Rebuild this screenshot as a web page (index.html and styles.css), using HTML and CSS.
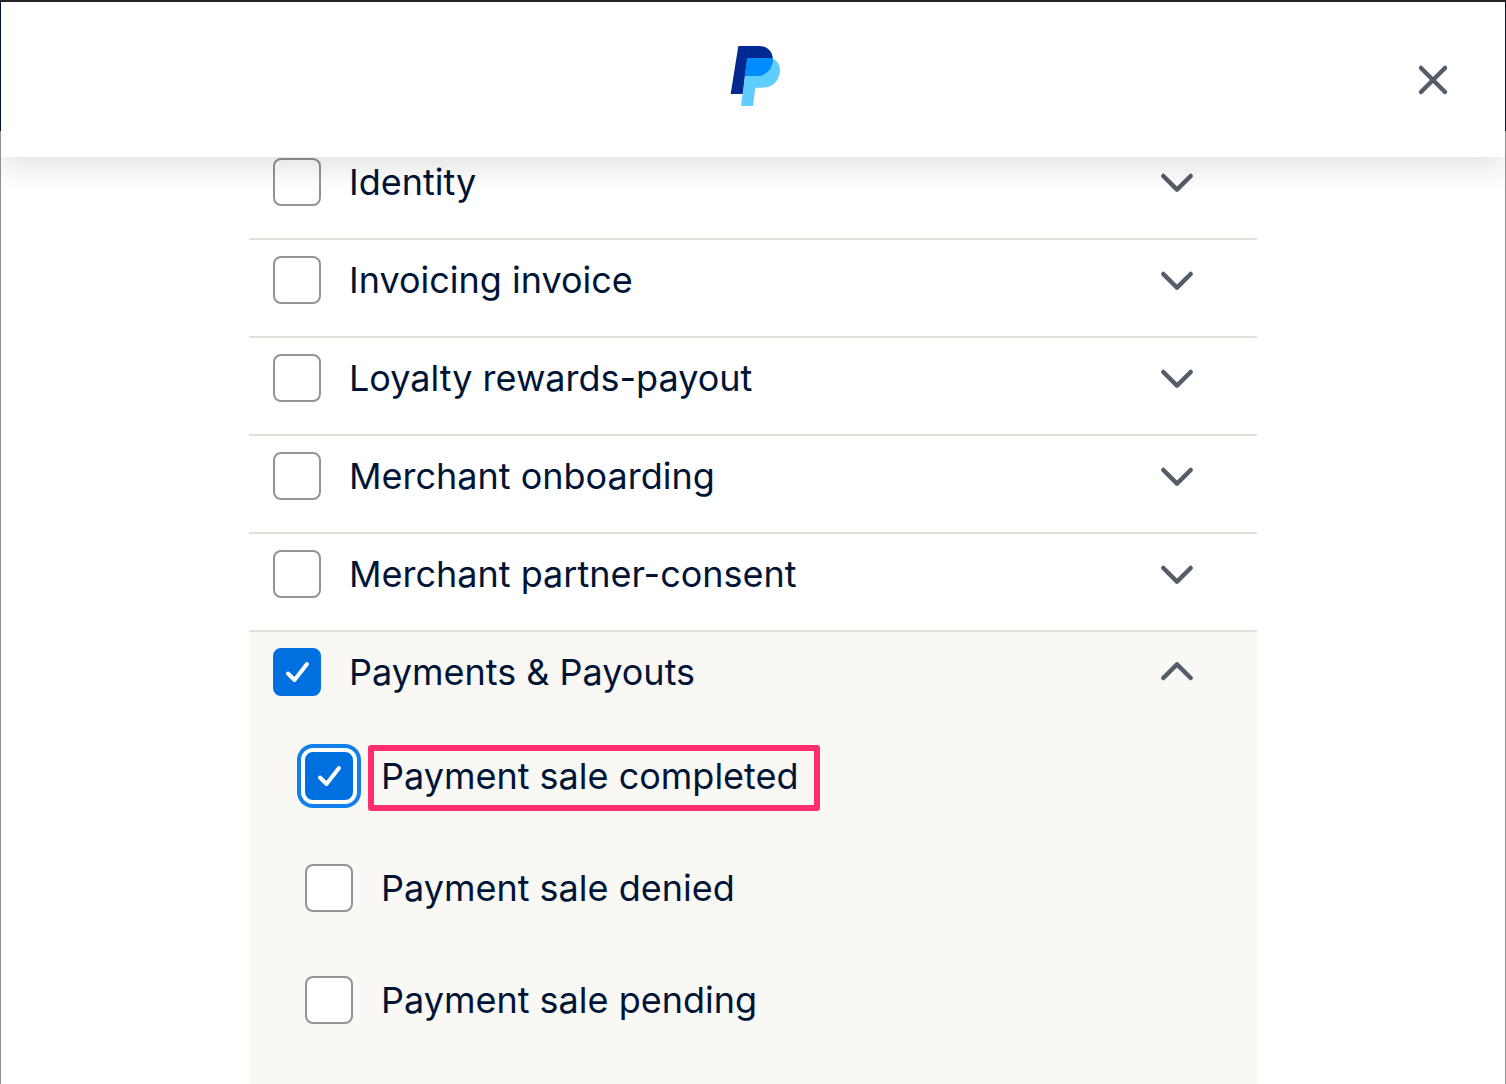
FILE: index.html
```html
<!DOCTYPE html>
<html lang="en">
<head>
<meta charset="utf-8">
<meta name="viewport" content="width=device-width, initial-scale=1">
<title>PayPal webhook events</title>
<link rel="stylesheet" href="styles.css">
</head>
<body>
<svg class="sprite" aria-hidden="true">
  <symbol id="chevron" viewBox="0 0 40 40"><path d="M6.300 14 20 27.700 33.700 14"/></symbol>
</svg>
<div class="dialog">
  <header class="header">
    <svg class="logo" viewBox="33 33 162 180" role="img" aria-label="PayPal">
      <path fill="#002991" d="M70 33H132C158 33 175 50 174 78C170 105 150 123 128 123H90L84 177H47Z"/>
      <path fill="#60cdff" d="M97 69H169C187 75 195 90 195 108C193 138 172 158 145 158H121L114 213H78Z"/>
      <path fill="#008cff" d="M97 69H172Q174 73 174 78C170 105 150 123 128 123H89Z"/>
    </svg>
    <button class="close" type="button" aria-label="Close">
      <svg class="icon" viewBox="0 0 40 40"><path d="M8 8 32 32M32 8 8 32"/></svg>
    </button>
  </header>
  <main class="events">
    <section class="group">
      <div class="row">
        <label class="option"><input class="check" type="checkbox"><span>Identity</span></label>
        <button class="toggle" type="button" aria-label="Expand Identity" aria-expanded="false"><svg class="icon"><use href="#chevron"/></svg></button>
      </div>
    </section>
    <section class="group">
      <div class="row">
        <label class="option"><input class="check" type="checkbox"><span>Invoicing invoice</span></label>
        <button class="toggle" type="button" aria-label="Expand Invoicing invoice" aria-expanded="false"><svg class="icon"><use href="#chevron"/></svg></button>
      </div>
    </section>
    <section class="group">
      <div class="row">
        <label class="option"><input class="check" type="checkbox"><span>Loyalty rewards-payout</span></label>
        <button class="toggle" type="button" aria-label="Expand Loyalty rewards-payout" aria-expanded="false"><svg class="icon"><use href="#chevron"/></svg></button>
      </div>
    </section>
    <section class="group">
      <div class="row">
        <label class="option"><input class="check" type="checkbox"><span>Merchant onboarding</span></label>
        <button class="toggle" type="button" aria-label="Expand Merchant onboarding" aria-expanded="false"><svg class="icon"><use href="#chevron"/></svg></button>
      </div>
    </section>
    <section class="group">
      <div class="row">
        <label class="option"><input class="check" type="checkbox"><span>Merchant partner-consent</span></label>
        <button class="toggle" type="button" aria-label="Expand Merchant partner-consent" aria-expanded="false"><svg class="icon"><use href="#chevron"/></svg></button>
      </div>
    </section>
    <section class="group group-open">
      <div class="row">
        <label class="option"><input class="check" type="checkbox" checked><span>Payments &amp; Payouts</span></label>
        <button class="toggle toggle-open" type="button" aria-label="Collapse Payments &amp; Payouts" aria-expanded="true"><svg class="icon"><use href="#chevron"/></svg></button>
      </div>
      <div class="children">
        <label class="option option-marked"><input class="check check-focus" type="checkbox" checked><span>Payment sale completed</span></label>
        <label class="option"><input class="check" type="checkbox"><span>Payment sale denied</span></label>
        <label class="option"><input class="check" type="checkbox"><span>Payment sale pending</span></label>
      </div>
    </section>
  </main>
</div>
</body>
</html>
```
FILE: styles.css
```css
* {
  box-sizing: border-box;
}

body {
  margin: 0;
  padding: 2px 1px 0;
  background: linear-gradient(#202226 2px, #001435 2px, #001435 131px, #909090 131px);
  color: #001435;
  font: 400 36px/48px Inter, "Liberation Sans", sans-serif;
}

.sprite {
  position: absolute;
  width: 0;
  height: 0;
}

.dialog {
  display: flex;
  flex-direction: column;
  min-height: calc(100vh - 2px);
  overflow: hidden;
  background: #fff;
}

.header {
  position: relative;
  z-index: 1;
  display: grid;
  grid-template-columns: 1fr auto 1fr;
  align-items: center;
  height: 155px;
  margin-bottom: -15px;
  padding: 0 52px;
  background: #fff;
  box-shadow: 0 10px 30px rgba(0, 0, 0, 0.12);
}

.logo {
  grid-column: 2;
  width: 54px;
  height: 60px;
  margin-bottom: 8px;
}

.close,
.toggle {
  display: block;
  padding: 0;
  border: 0;
  background: none;
  color: #545d68;
  cursor: pointer;
}

.close {
  justify-self: end;
}

.icon {
  display: block;
  width: 40px;
  height: 40px;
  fill: none;
  stroke: currentColor;
  stroke-width: 4.500;
  stroke-linecap: round;
  stroke-linejoin: round;
}

.toggle-open .icon {
  transform: rotate(180deg);
}

.events {
  display: flex;
  flex: 1;
  flex-direction: column;
  width: 100%;
  max-width: 1008px;
  margin: 0 auto;
}

.group {
  border-bottom: 2px solid #e2dfd9;
}

.group-open {
  flex: 1;
  border-bottom: 0;
  background: #f9f8f5;
}

.row {
  display: flex;
  align-items: center;
  justify-content: space-between;
  padding: 16px 60px 32px 24px;
}

.option {
  display: flex;
  align-items: center;
  gap: 28px;
}

.children {
  display: flex;
  flex-direction: column;
  align-items: flex-start;
  gap: 64px;
  padding: 24px 56px 60px;
}

.check {
  appearance: none;
  flex: none;
  width: 48px;
  height: 48px;
  margin: 0;
  border: 2px solid #929496;
  border-radius: 8px;
  background: #fff;
}

.group:first-child .check {
  background: transparent;
}

.check:checked {
  border-color: #0070e0;
  background: #0070e0 url("data:image/svg+xml,%3Csvg xmlns='http://www.w3.org/2000/svg' viewBox='0 0 44 44'%3E%3Cpath d='M13 23.500 19.500 30 32 14' fill='none' stroke='white' stroke-width='4' stroke-linecap='round' stroke-linejoin='round'/%3E%3C/svg%3E") center / 44px no-repeat;
}

.check-focus {
  box-shadow: 0 0 0 4px #fff, 0 0 0 8px #1180ed;
}

.option-marked {
  position: relative;
}

/* Highlight frame around the label text */
.option-marked::after {
  content: "";
  position: absolute;
  inset: -7px -21px -11px 63px;
  border: 6px solid #ff2e6e;
  border-radius: 3px;
}
```
